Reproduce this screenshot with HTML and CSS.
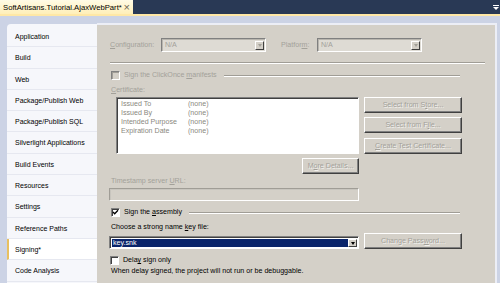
FILE: index.html
```html
<!DOCTYPE html>
<html lang="en">
<head>
    <meta charset="UTF-8">
    <title>SoftArtisans.Tutorial.AjaxWebPart - Signing</title>
    <link rel="stylesheet" href="styles.css">
</head>
<body>
    <div class="tabwell">
        <div class="doctab">
            <span class="doctab-title">SoftArtisans.Tutorial.AjaxWebPart*</span>
            <span class="doctab-close">&times;</span>
        </div>
        <svg class="well-menu" width="6" height="5" viewBox="0 0 6 5">
            <rect x="0" y="0" width="6" height="1" fill="#ffffff"/>
            <path d="M0 2 L6 2 L3 5 Z" fill="#ffffff"/>
        </svg>
    </div>
    <div class="tabstrip"></div>

    <div class="workspace">
        <ul class="nav">
            <li>Application</li>
            <li>Build</li>
            <li>Web</li>
            <li>Package/Publish Web</li>
            <li>Package/Publish SQL</li>
            <li>Silverlight Applications</li>
            <li>Build Events</li>
            <li>Resources</li>
            <li>Settings</li>
            <li>Reference Paths</li>
            <li class="active">Signing*</li>
            <li>Code Analysis</li>
        </ul>

        <div class="page">
            <div class="row row-config">
                <span class="lbl disabled lbl-config"><u>C</u>onfiguration:</span>
                <span class="combo combo-off combo-short"><span class="combo-text">N/A</span><span class="combo-btn"><i class="arrow"></i></span></span>
                <span class="lbl disabled lbl-platform">Platfor<u>m</u>:</span>
                <span class="combo combo-off combo-short"><span class="combo-text">N/A</span><span class="combo-btn"><i class="arrow"></i></span></span>
            </div>

            <div class="sep"></div>

            <div class="row row-check row-clickonce">
                <span class="check check-off"></span>
                <span class="lbl disabled">Sign the ClickOnce <u>m</u>anifests</span>
                <span class="groupline line-clickonce"></span>
            </div>

            <div class="lbl disabled caption cert-caption"><u>C</u>ertificate:</div>

            <div class="cert-area">
                <div class="cert-box">
                    <div class="cert-row"><span class="cert-key">Issued To</span><span>(none)</span></div>
                    <div class="cert-row"><span class="cert-key">Issued By</span><span>(none)</span></div>
                    <div class="cert-row"><span class="cert-key">Intended Purpose</span><span>(none)</span></div>
                    <div class="cert-row"><span class="cert-key">Expiration Date</span><span>(none)</span></div>
                </div>
                <div class="cert-buttons">
                    <span class="btn disabled">Select from S<u>t</u>ore...</span>
                    <span class="btn disabled btn-file">Select from F<u>i</u>le...</span>
                    <span class="btn disabled btn-test"><u>C</u>reate Test Certificate...</span>
                </div>
            </div>

            <div class="row row-more">
                <span class="btn disabled btn-more">M<u>o</u>re Details...</span>
            </div>

            <div class="lbl disabled caption ts-caption">Timestamp server <u>U</u>RL:</div>
            <div class="field field-off"></div>

            <div class="row row-check row-sign">
                <span class="check">
                    <svg width="7" height="7" viewBox="0 0 7 7"><path d="M1 3 L2.7 4.8 L6 1.2" fill="none" stroke="#000000" stroke-width="1.3"/></svg>
                </span>
                <span class="lbl">Sign the <u>a</u>ssembly</span>
                <span class="groupline line-sign"></span>
            </div>

            <div class="lbl caption choose-caption">Choose a strong name <u>k</u>ey file:</div>

            <div class="row row-key">
                <span class="combo combo-long"><span class="combo-text combo-selected">key.snk</span><span class="combo-btn"><i class="arrow arrow-on"></i></span></span>
                <span class="btn disabled btn-password">Change Pass<u>w</u>ord...</span>
            </div>

            <div class="row row-check row-delay">
                <span class="check"></span>
                <span class="lbl">Dela<u>y</u> sign only</span>
            </div>

            <div class="lbl caption note">When delay signed, the project will not run or be debuggable.</div>
        </div>
    </div>
</body>
</html>
```

FILE: styles.css
```css
* {
    box-sizing: border-box;
}
html, body {
    margin: 0;
    padding: 0;
}
body {
    width: 500px;
    height: 283px;
    overflow: hidden;
    background-color: #ccd3e5;
    font-family: "Liberation Sans", Arial, sans-serif;
    font-size: 7.1px;
    color: #000000;
}
u {
    text-decoration: underline;
    text-underline-offset: 1px;
}

/* document tab well */
.tabwell {
    height: 14px;
    background-color: #293955;
    display: flex;
    align-items: center;
}
.doctab {
    width: 133px;
    height: 14px;
    background: linear-gradient(#fffbe6, #ffefb8);
    display: flex;
    align-items: center;
    padding-left: 3px;
    font-size: 7.7px;
    white-space: nowrap;
}
.doctab-title {
    flex: none;
}
.doctab-close {
    flex: none;
    margin-left: auto;
    margin-right: 3px;
    color: #6f6a55;
    font-size: 11px;
    line-height: 11px;
}
.well-menu {
    margin-left: auto;
    margin-right: 1px;
    margin-top: 1px;
}
.tabstrip {
    height: 2px;
    background-color: #ffe8a6;
}

.workspace {
    display: flex;
    height: 267px;
    padding: 7px 3px 0 7px;
}

/* left navigation */
.nav {
    list-style: none;
    margin: 1px 0 0 0;
    padding: 2px 0 0 0;
    width: 90px;
    background-color: #f6f7fb;
    border-top-left-radius: 4px;
    font-size: 7px;
}
.nav li {
    height: 21.3px;
    line-height: 21px;
    padding-left: 8px;
    border-bottom: 1px solid #e6e8f0;
}
.nav li.active {
    background-color: #ffffff;
    border-left: 2px solid #e8c060;
    padding-left: 6px;
}

/* property page */
.page {
    flex: 1;
    background-color: #d4d0c8;
    border-top: 2px solid #eceef6;
    border-right: 2px solid #eceef6;
    padding-left: 13px;
}
.row {
    display: flex;
    align-items: center;
}
.lbl {
    line-height: 9px;
    white-space: nowrap;
}
.disabled {
    color: #a3a19a;
}
.btn.disabled {
    text-shadow: 1px 1px 0 rgba(255, 255, 255, 0.7);
}
.caption {
    height: 9px;
    padding-left: 1px;
}

.row-config {
    margin-top: 13px;
    height: 14px;
}
.lbl-config {
    width: 51px;
}
.lbl-platform {
    width: 36px;
    margin-left: 15px;
}

.combo {
    display: flex;
    align-items: stretch;
    height: 14px;
    border: 1px solid;
    border-color: #808080 #ffffff #ffffff #808080;
    box-shadow: inset 1px 1px 0 #404040;
    padding: 2px 1px 1px 2px;
    background-color: #ffffff;
}
.combo-off {
    background-color: #dedbd4;
    box-shadow: inset 1px 1px 0 #b8b5ae;
    color: #a3a19a;
}
.combo-short {
    width: 105px;
}
.combo-long {
    width: 250px;
    height: 13px;
    margin-left: -1px;
}
.combo-text {
    flex: 1;
    line-height: 9px;
    padding-left: 1px;
}
.combo-selected {
    background-color: #0a246a;
    color: #ffffff;
}
.combo-btn {
    width: 9px;
    display: flex;
    align-items: center;
    justify-content: center;
    background-color: #d4d0c8;
    border: 1px solid;
    border-color: #ffffff #404040 #404040 #ffffff;
}
.arrow {
    width: 0;
    height: 0;
    border-left: 2.5px solid transparent;
    border-right: 2.5px solid transparent;
    border-top: 3px solid #a3a19a;
}
.arrow-on {
    border-top-color: #000000;
}

.sep {
    margin-top: 10px;
    width: 375px;
    border-top: 1px solid #a09d96;
    border-bottom: 1px solid #ffffff;
}

.row-check {
    height: 9px;
    width: 350px;
}
.check {
    width: 9px;
    height: 9px;
    margin-left: 1px;
    margin-right: 4px;
    border: 1px solid;
    border-color: #808080 #ffffff #ffffff #808080;
    box-shadow: inset 1px 1px 0 #404040;
    background-color: #ffffff;
    display: flex;
    align-items: center;
    justify-content: center;
}
.check-off {
    background-color: #d4d0c8;
    box-shadow: inset 1px 1px 0 #a09d96;
}
.groupline {
    margin-left: auto;
    border-top: 1px solid #a09d96;
    border-bottom: 1px solid #ffffff;
}
.row-clickonce {
    margin-top: 7px;
}
.line-clickonce {
    width: 236px;
}

.cert-caption {
    margin-top: 6px;
}
.cert-area {
    display: flex;
    margin-top: 2px;
    height: 57px;
}
.cert-box {
    margin-left: 6px;
    width: 243px;
    height: 57px;
    background-color: #ffffff;
    border: 1px solid;
    border-color: #808080 #ffffff #ffffff #808080;
    box-shadow: inset 1px 1px 0 #404040;
    padding: 2px 0 0 4px;
    color: #8a8880;
}
.cert-row {
    display: flex;
    line-height: 9px;
    height: 9px;
}
.cert-key {
    width: 67px;
}
.cert-buttons {
    display: flex;
    flex-direction: column;
    margin-left: 5px;
    width: 98px;
}
.btn {
    display: flex;
    align-items: center;
    justify-content: center;
    height: 16px;
    background-color: #d4d0c8;
    border: 1px solid;
    border-color: #ffffff #404040 #404040 #ffffff;
    box-shadow: inset -1px -1px 0 #808080;
    white-space: nowrap;
}
.btn-file {
    margin-top: 4px;
}
.btn-test {
    margin-top: 5px;
}

.row-more {
    margin-top: 4px;
    height: 16px;
}
.btn-more {
    margin-left: 192px;
    width: 57px;
}

.ts-caption {
    margin-top: 3px;
}
.field {
    margin-top: 2px;
    margin-left: -1px;
    width: 250px;
    height: 13px;
    border: 1px solid;
    border-color: #a09d96 #ffffff #ffffff #a09d96;
}
.field-off {
    background-color: #d4d0c8;
    box-shadow: inset 1px 1px 0 #c8c5be;
}

.row-sign {
    margin-top: 7px;
}
.line-sign {
    width: 271px;
}
.choose-caption {
    margin-top: 6px;
}
.row-key {
    margin-top: 1px;
    height: 16px;
    align-items: flex-end;
}
.btn-password {
    margin-left: 5px;
    width: 98px;
}
.row-delay {
    margin-top: 7px;
}
.row-delay .check {
    margin-left: 0;
}
.note {
    margin-top: 2px;
}
```
